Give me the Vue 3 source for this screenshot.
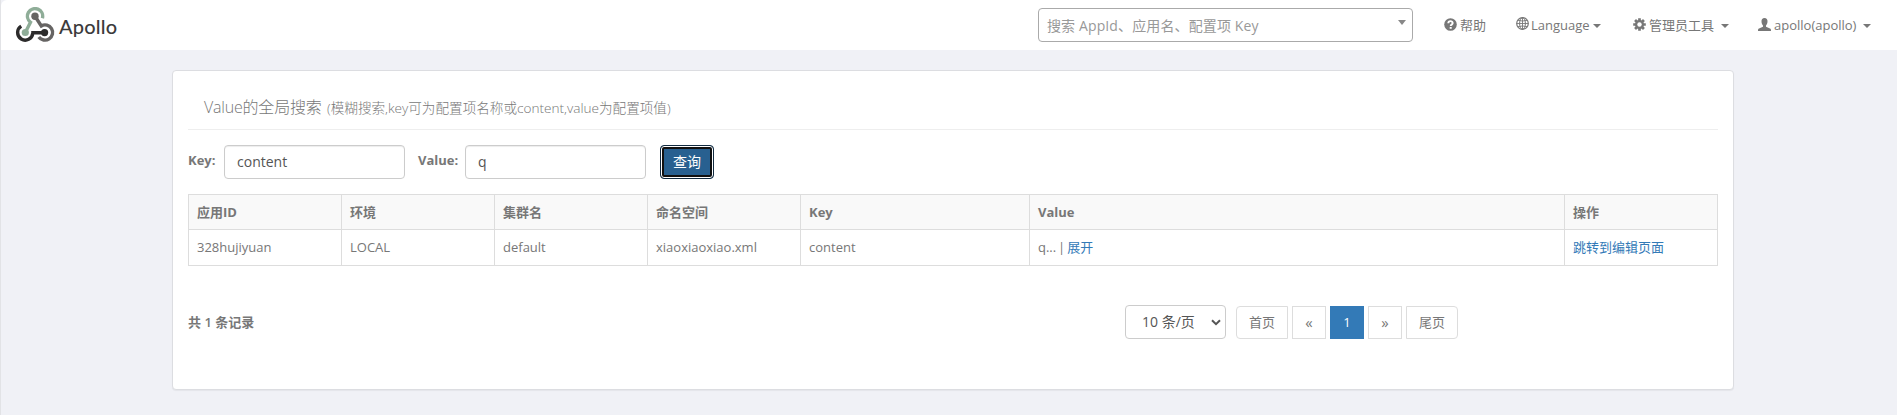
<script setup>
import { ref } from 'vue'

const searchKey = ref('content')
const searchValue = ref('q')
const columns = ['应用ID', '环境', '集群名', '命名空间', 'Key', 'Value', '操作']
</script>

<template>
  <div class="page">
    <header class="navbar">
      <div class="brand">
        <svg class="logo" viewBox="0 0 40 36" width="40" height="36" fill="none">
          <path d="M27.4 11.2A7.6 7.6 0 1 0 15.5 15.3L10.3 25.5" stroke="#8fad98" stroke-width="3.4" />
          <path d="M20 9.2 26.3 18.9A7.6 7.6 0 1 1 23.8 29.9" stroke="#666463" stroke-width="3.4" />
          <path d="M6.2 19.1A7.6 7.6 0 1 0 17.8 26.2M16.2 25.7H30" stroke="#2c2b2b" stroke-width="3.4" />
          <circle cx="20" cy="9.2" r="3.7" fill="#666463" />
          <circle cx="10.3" cy="25.5" r="3.6" fill="#8fad98" />
          <circle cx="29.6" cy="25.6" r="3.6" fill="#2c2b2b" />
        </svg>
        <span class="brand-name">Apollo</span>
      </div>
      <div class="app-search">
        <span>搜索 AppId、应用名、配置项 Key</span>
        <i class="search-arrow"></i>
      </div>
      <nav>
        <a class="nav-item help">
          <svg width="13" height="13" viewBox="0 0 13 13"><circle cx="6.5" cy="6.5" r="6.3" fill="#777" /><path d="M4.3 5.2C4.3 2.5 8.8 2.5 8.7 5.1 8.7 6.7 6.7 6.5 6.7 8" fill="none" stroke="#fff" stroke-width="1.9" /><path d="M5.7 9h2v1.8h-2z" fill="#fff" /></svg>
          <span>帮助</span>
        </a>
        <a class="nav-item lang">
          <svg width="13" height="13" viewBox="0 0 13 13" fill="none" stroke="#777"><circle cx="6.5" cy="6.5" r="5.8" stroke-width="1.2" /><ellipse cx="6.5" cy="6.5" rx="2.9" ry="5.8" /><path d="M.7 6.5h11.6M6.5.7v11.6M1.8 3.3Q6.5 4.8 11.2 3.3M1.8 9.7Q6.5 8.2 11.2 9.7" stroke-width=".9" /></svg>
          <span>Language</span><i class="caret"></i>
        </a>
        <a class="nav-item tools">
          <svg width="13" height="13" viewBox="0 0 13 13"><g stroke="#777" stroke-width="2.7"><path d="M6.5.2v12.6M.2 6.5h12.6M2.05 2.05l8.9 8.9M10.95 2.05l-8.9 8.9" /></g><circle cx="6.5" cy="6.5" r="4.5" fill="#777" /><circle cx="6.5" cy="6.5" r="2.2" fill="#fff" /></svg>
          <span>管理员工具</span><i class="caret"></i>
        </a>
        <a class="nav-item user">
          <svg width="13" height="13" viewBox="0 0 13 13"><path d="M6.5 0C4.5 0 3.4 1.3 3.5 3.3 3.5 5.4 4.2 6.7 5 7.5V8.7L1 10.6C.2 11 0 11.6 0 13H13C13 11.6 12.8 11 12 10.6L8 8.7V7.5C8.8 6.7 9.5 5.4 9.5 3.3 9.6 1.3 8.5 0 6.5 0Z" fill="#777" /></svg>
          <span>apollo(apollo)</span><i class="caret"></i>
        </a>
      </nav>
    </header>

    <main class="panel">
      <h1><span class="title">Value的全局搜索</span><small>(模糊搜索,key可为配置项名称或content,value为配置项值)</small></h1>
      <form class="query" @submit.prevent>
        <label class="key-label" for="key">Key:</label>
        <input id="key" v-model="searchKey" type="text" />
        <label class="value-label" for="value">Value:</label>
        <input id="value" v-model="searchValue" type="text" />
        <button type="submit">查询</button>
      </form>
      <table>
        <colgroup>
          <col class="c-std" /><col class="c-std" /><col class="c-std" /><col class="c-std" />
          <col class="c-key" /><col class="c-value" /><col class="c-std" />
        </colgroup>
        <thead>
          <tr><th v-for="c in columns" :key="c">{{ c }}</th></tr>
        </thead>
        <tbody>
          <tr>
            <td>328hujiyuan</td><td>LOCAL</td><td>default</td><td>xiaoxiaoxiao.xml</td><td>content</td>
            <td>q... <span class="bar">|</span> <a>展开</a></td>
            <td><a>跳转到编辑页面</a></td>
          </tr>
        </tbody>
      </table>
      <footer>
        <div class="total">共 1 条记录</div>
        <div class="page-size">
          <span>10 条/页</span>
          <svg width="10" height="7" viewBox="0 0 10 7"><path d="M1 1.2l4 4 4-4" fill="none" stroke="#555" stroke-width="2" /></svg>
        </div>
        <ul class="pagination">
          <li class="wide first">首页</li>
          <li class="step">«</li>
          <li class="active">1</li>
          <li class="step">»</li>
          <li class="wide last">尾页</li>
        </ul>
      </footer>
    </main>
  </div>
</template>

<style>
body {
  background: #f0f1f6;
}
</style>

<style scoped>
* {
  box-sizing: border-box;
}
.page {
  height: 415px;
  overflow: hidden;
  border-left: 1px solid #e2e3e6;
  background: #f0f1f6;
  color: #777;
  font: 13px/20px "Open Sans", "Noto Sans CJK SC", sans-serif;
}
.navbar {
  display: flex;
  height: 50px;
  background: #fff;
  border-top-left-radius: 6px;
}
.brand {
  display: flex;
  width: 1037px;
  padding: 7px 0 0 14px;
}
.brand-name {
  margin: 4px 0 0 4px;
  color: #3c3b3b;
  font: 500 20px/30px Lato, sans-serif;
  letter-spacing: 0.2px;
}
.app-search {
  display: flex;
  justify-content: space-between;
  width: 375px;
  height: 34px;
  margin-top: 8px;
  padding: 0 6px 0 8px;
  border: 1px solid #aaa;
  border-radius: 4px;
  color: #999;
  font-size: 14px;
  line-height: 34px;
}
.app-search span {
  letter-spacing: 0.12px;
}
.search-arrow {
  height: 5px;
  margin-top: 11px;
  border: 4px solid transparent;
  border-top: 5px solid #888;
  border-bottom: 0;
}
nav {
  display: flex;
  padding-top: 15px;
}
.nav-item {
  display: flex;
  white-space: nowrap;
}
.nav-item svg {
  flex: none;
  margin: 3px 3px 0 0;
}
.help {
  width: 72px;
  margin-left: 31px;
}
.lang {
  width: 117px;
}
.tools {
  width: 125px;
}
.nav-item.lang svg {
  margin: 2px 2px 0 0;
}
.caret {
  height: 4px;
  margin: 9px 0 0 7px;
  border: 4px solid transparent;
  border-top-color: #777;
  border-bottom: 0;
}
.nav-item.lang .caret {
  margin-left: 3px;
}
.panel {
  width: 1562px;
  height: 320px;
  margin: 20px 0 0 171px;
  padding: 0 15px;
  border: 1px solid #dcdde1;
  border-radius: 4px;
  background: #fff;
  box-shadow: 0 1px 1px rgba(0, 0, 0, 0.05);
}
h1 {
  display: flex;
  align-items: baseline;
  height: 59px;
  margin: 0;
  padding: 21px 0 0 16px;
  border-bottom: 1px solid #eee;
  font-size: 16px;
  font-weight: 300;
  line-height: 30px;
  white-space: nowrap;
}
.title {
  width: 123px;
  letter-spacing: -0.2px;
}
small {
  font-size: 13.6px;
}
.query {
  display: flex;
  height: 34px;
  margin: 15px 0;
}
label {
  font-weight: 700;
  line-height: 30px;
}
.key-label {
  width: 36px;
}
.value-label {
  width: 47px;
  margin-left: 13px;
}
input {
  width: 181px;
  height: 34px;
  padding: 0 12px;
  border: 1px solid #ccc;
  border-radius: 4px;
  outline: 0;
  box-shadow: inset 0 1px 1px rgba(0, 0, 0, 0.075);
  color: #555;
  font: 14px "Open Sans", sans-serif;
}
#key {
  padding-bottom: 2px;
}
#value {
  padding-bottom: 2px;
}
button {
  width: 54px;
  height: 34px;
  margin-left: 14px;
  padding: 0 0 2px;
  border: 1px solid #122b40;
  border-radius: 4px;
  outline: 0;
  background: #286090;
  box-shadow: inset 0 0 0 1px #fff, inset 0 0 0 3px #101010;
  color: #fff;
  font: 14px "Noto Sans CJK SC", sans-serif;
}
table {
  width: 1530px;
  table-layout: fixed;
  border-collapse: collapse;
}
.c-std {
  width: 153px;
}
.c-key {
  width: 229px;
}
.c-value {
  width: 535px;
}
th,
td {
  height: 35px;
  padding: 0 8px;
  border: 1px solid #ddd;
  text-align: left;
}
td {
  height: 36px;
  padding-bottom: 2px;
}
.bar {
  margin: 0 -1.5px;
}
th {
  background: #f9f9f9;
}
td a {
  color: #337ab7;
}
footer {
  display: flex;
  margin-top: 39px;
}
.total {
  width: 937px;
  padding-top: 7px;
  font-weight: 600;
}
.page-size {
  display: flex;
  align-items: center;
  justify-content: space-between;
  width: 101px;
  height: 34px;
  padding: 0 4px 0 16px;
  border: 1px solid #ccc;
  border-radius: 4px;
  color: #555;
  font-size: 14px;
}
.pagination {
  display: flex;
  gap: 4px;
  margin: 1px 0 0 10px;
  padding: 0;
  list-style: none;
}
li {
  width: 34px;
  height: 33px;
  border: 1px solid #ddd;
  line-height: 30px;
  text-align: center;
}
.step {
  font-size: 15px;
}
.wide {
  width: 52px;
}
.first {
  border-radius: 4px 0 0 4px;
}
.last {
  border-radius: 0 4px 4px 0;
}
.active {
  border-color: #337ab7;
  background: #337ab7;
  color: #fff;
}
</style>
